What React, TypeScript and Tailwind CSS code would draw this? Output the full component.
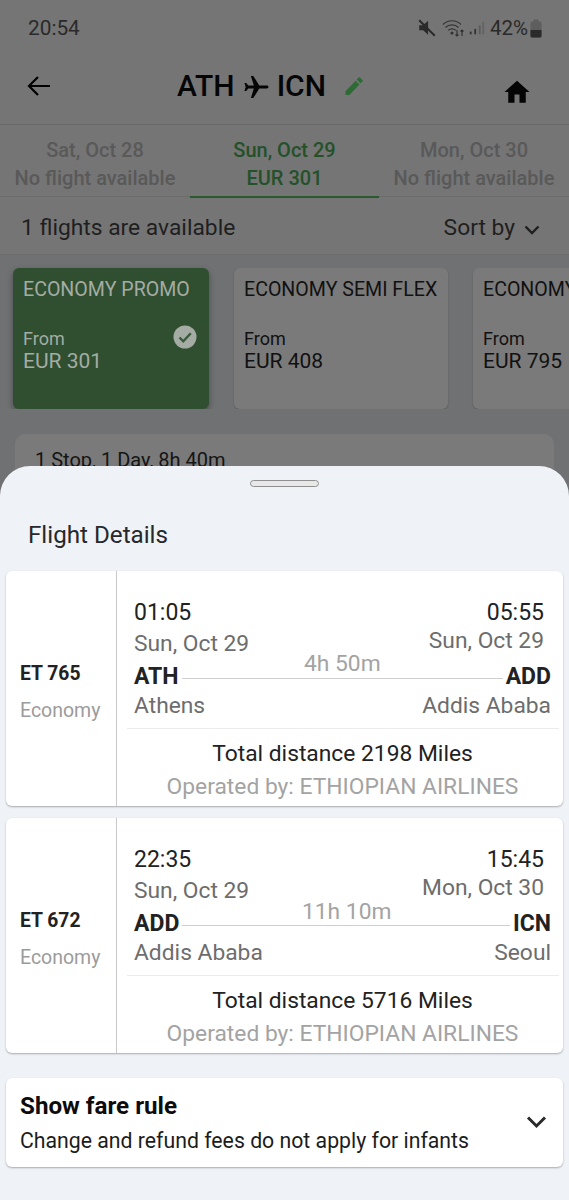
import React from "react";

function Leg(p: {
  no: string; dep: string; arr: string; depDate: string; arrDate: string; dur: string;
  from: string; to: string; fromCity: string; toCity: string; miles: string; durClass: string;
}) {
  return (
    <div className="flex h-[235px] mx-[6px] bg-white rounded-[6px] shadow-[0_1px_2px_rgba(0,0,0,0.3)]">
      <div className="w-[111px] shrink-0 border-r border-[#c9c9c9] pl-[14px] pt-[91px]">
        <div className="text-[19.300px] leading-[24px] font-bold text-[#222]">{p.no}</div>
        <div className="text-[19.500px] leading-[24px] text-[#9b9b9b] mt-[13px]">Economy</div>
      </div>
      <div className="flex-1 min-w-0 pt-[28px]">
        <div className="pr-[12px] pl-[17px]">
          <div className="flex justify-between text-[23px] leading-[27px] text-[#222] pr-[7px]">
            <span>{p.dep}</span><span>{p.arr}</span>
          </div>
          <div className="flex justify-between text-[22.800px] leading-[27px] text-[#6d6d6d] pr-[7px] mt-[1px]">
            <span className="mt-[3px]">{p.depDate}</span>
            <span>{p.arrDate}</span>
          </div>
          <div className="relative flex items-center mt-[5px] h-[30px]">
            <span className="text-[23px] leading-[30px] font-bold text-[#222]">{p.from}</span>
            <div className="flex-1 h-px bg-[#cfcfcf] mx-[3px] mt-[2px]" />
            <span className="text-[23px] leading-[30px] font-bold text-[#222]">{p.to}</span>
            <span className={"absolute text-[22.800px] leading-[27px] text-[#a3a3a3] " + p.durClass}>{p.dur}</span>
          </div>
          <div className="flex justify-between text-[22.800px] leading-[27px] text-[#6d6d6d]">
            <span>{p.fromCity}</span><span>{p.toCity}</span>
          </div>
        </div>
        <div className="h-px bg-[#ececec] ml-[10px] mr-[4px] mt-[9px]" />
        <div className="text-center text-[22.800px] leading-[27px] text-[#222] mt-[11px] pl-[5px]">Total distance {p.miles} Miles</div>
        <div className="text-center text-[22.800px] leading-[27px] text-[#a3a3a3] mt-[6px] pl-[5px]">Operated by: ETHIOPIAN AIRLINES</div>
      </div>
    </div>
  );
}

function Fare(p: { name: string; price: string; selected?: boolean; cls: string }) {
  return (
    <div className={"relative shrink-0 h-[141px] rounded-[6px] pt-[8px] " + p.cls}>
      <div className="text-[19.600px] leading-[28px] whitespace-nowrap">{p.name}</div>
      <div className="text-[18px] leading-[24px] mt-[23px]">From</div>
      <div className="text-[21px] leading-[26px] mt-[-3px]">{p.price}</div>
      {p.selected && (
        <svg className="absolute right-[12px] top-[57px]" width="24" height="24" viewBox="0 0 24 24">
          <circle cx="12" cy="12" r="11.5" fill="#a4aca4" />
          <path d="M6.5 12.5l3.8 3.8 7.5-8" fill="none" stroke="#3a5a3c" strokeWidth="2.4" />
        </svg>
      )}
    </div>
  );
}

export default function App() {
  return (
    <div className="relative w-[569px] h-[1200px] overflow-hidden bg-[#6f7173] font-['Roboto',sans-serif]">
      <div className="bg-[#757575]">
        <div className="flex items-center justify-between h-[56px] pl-[28px] pr-[27px] text-[#2a2a2a]">
          <span className="text-[20.800px] leading-[24px]">20:54</span>
          <div className="flex items-center">
            <svg width="20" height="20" viewBox="0 0 18 18" className="mr-[5px]">
              <path d="M2 6.5h3.5L10 2.5v12.5l-4.5-4H2z" fill="#2a2a2a" />
              <path d="M2 2l14 14" stroke="#2a2a2a" strokeWidth="1.8" />
            </svg>
            <svg width="24" height="20" viewBox="0 0 24 20" fill="none" stroke="#333" strokeWidth="1.2">
              <path d="M1 6.5c5-5 13-5 18 0M3.5 9.5c3.5-3.5 9.5-3.5 13 0M6.2 12.3c2-2 5.600-2 7.600 0" />
              <circle cx="10" cy="15" r="1" fill="#333" />
              <path d="M15 12v6M13.500 16.500l1.500 1.500 1.500-1.500M20 18v-6M18.500 13.500l1.500-1.500 1.500 1.500" />
            </svg>
            <svg width="18" height="18" viewBox="0 0 20 18" className="ml-[2px]">
              <rect x="2" y="13" width="2" height="3" fill="#333" />
              <rect x="7" y="10" width="2" height="6" fill="#333" />
              <rect x="12" y="6" width="2" height="10" fill="#5c5c5c" />
              <rect x="16" y="2" width="2" height="14" fill="#636363" />
            </svg>
            <span className="text-[20.500px] leading-[24px] ml-[4px]">42%</span>
            <svg width="12" height="19" viewBox="0 0 12 19" className="ml-[2px]">
              <rect x="3.500" y="0.500" width="5" height="2.500" fill="#5e5e5e" />
              <rect x="0.500" y="2.500" width="11" height="16" rx="1.500" fill="#5e5e5e" />
              <path d="M0.500 11h11v6a1.500 1.500 0 0 1-1.500 1.500h-8a1.500 1.500 0 0 1-1.500-1.500z" fill="#2a2a2a" />
            </svg>
          </div>
        </div>

        <div className="relative flex items-center justify-center h-[69px] border-b border-[#686868]">
          <svg className="absolute left-[27px] top-[18px]" width="24" height="24" viewBox="0 0 24 24" fill="none" stroke="#000" strokeWidth="2.2">
            <path d="M23 12H2M11 3l-9 9 9 9" />
          </svg>
          <div className="flex items-center text-[#050505] text-[30px] leading-[34px] font-medium mb-[9px] mr-[66px]">
            <span>ATH</span>
            <svg className="mx-[8px] mt-[2px]" width="26" height="26" viewBox="0 0 24 24" fill="#050505">
              <path d="M23.500 12c0-.8-.7-1.300-1.500-1.300h-7L9.500 1.800H7.300l2.700 8.900H4.800L3 8.300H1.300l1.200 3.700-1.200 3.700H3l1.800-2.400H10l-2.700 8.900h2.200l5.500-8.900h7c.8 0 1.500-.5 1.500-1.300z" />
            </svg>
            <span>ICN</span>
          </div>
          <svg className="absolute left-[342px] top-[18px]" width="24" height="24" viewBox="0 0 24 24" fill="#2d6a35">
            <path d="M3.500 17.200V21h3.800L17.500 10.500l-3.800-3.800zM20.500 7.500a1 1 0 0 0 0-1.400l-2.600-2.600a1 1 0 0 0-1.400 0l-1.900 1.900 3.900 3.900z" />
          </svg>
          <svg className="absolute left-[502px] top-[21px]" width="30" height="30" viewBox="0 0 24 24" fill="#050505">
            <path d="M10 20.500v-6.500h4v6.500h5v-8.500h3L12 3 2 12h3v8.500z" />
          </svg>
        </div>

        <div className="flex h-[72px] border-b border-[#6c6c6c]">
          <div className="w-[190px] text-center font-medium text-[#595959] text-[20px] leading-[28px] pt-[11px]">
            <div>Sat, Oct 28</div><div>No flight available</div>
          </div>
          <div className="w-[189px] text-center font-medium text-[#24512a] text-[20px] leading-[28px] pt-[11px] border-b-2 border-[#2c5a30] h-[73px]">
            <div>Sun, Oct 29</div><div>EUR 301</div>
          </div>
          <div className="w-[190px] text-center font-medium text-[#595959] text-[20px] leading-[28px] pt-[11px]">
            <div>Mon, Oct 30</div><div>No flight available</div>
          </div>
        </div>

        <div className="flex items-center justify-between h-[58px] pl-[21px] pr-[29px] text-[#1f1f1f] border-b border-[#6c6c6c]">
          <span className="text-[22.800px] leading-[28px] mt-[4px]">1 flights are available</span>
          <div className="flex items-center">
            <span className="text-[22.800px] leading-[28px] mt-[4px]">Sort by</span>
            <svg className="ml-[9px] mt-[8px]" width="16" height="10" viewBox="0 0 16 10" fill="none" stroke="#1f1f1f" strokeWidth="2.400">
              <path d="M1.500 1.500L8 8l6.500-6.500" />
            </svg>
          </div>
        </div>
      </div>

      <div className="flex items-start gap-[25px] pl-[13px] pt-[13px] overflow-hidden">
        <Fare name="ECONOMY PROMO" price="EUR 301" selected cls="w-[196px] pl-[10px] bg-[#2f4f30] text-[#a4aca4] shadow-[0_3px_6px_rgba(0,0,0,0.35)]" />
        <Fare name="ECONOMY SEMI FLEX" price="EUR 408" cls="w-[214px] pl-[10px] bg-[#7a7a7a] text-[#111] shadow-[0_1px_2px_rgba(0,0,0,0.2)]" />
        <Fare name="ECONOMY" price="EUR 795" cls="w-[214px] pl-[10px] bg-[#7a7a7a] text-[#111] shadow-[0_1px_2px_rgba(0,0,0,0.2)]" />
      </div>

      <div className="mx-[15px] mt-[25px] h-[100px] rounded-[10px] bg-[#7a7a7a] pl-[20px] pt-[12px] text-[20px] leading-[28px] text-[#151515]">
        1 Stop, 1 Day, 8h 40m
      </div>

      <div className="absolute left-0 right-0 top-[466px] bottom-0 bg-[#eff2f7] rounded-t-[30px]">
        <div className="w-[69px] h-[7px] mx-auto mt-[14px] rounded-full bg-[#e8e8e8] border border-[#8f8f8f]" />
        <div className="text-[24.200px] leading-[30px] text-[#26282b] pl-[28px] mt-[33px]">Flight Details</div>
        <div className="flex flex-col gap-[12px] mt-[21px]">
          <Leg no="ET 765" dep="01:05" arr="05:55" depDate="Sun, Oct 29" arrDate="Sun, Oct 29" dur="4h 50m" durClass="left-[170px] top-[-12px]" from="ATH" to="ADD" fromCity="Athens" toCity="Addis Ababa" miles="2198" />
          <Leg no="ET 672" dep="22:35" arr="15:45" depDate="Sun, Oct 29" arrDate="Mon, Oct 30" dur="11h 10m" durClass="left-[168px] top-[-11px]" from="ADD" to="ICN" fromCity="Addis Ababa" toCity="Seoul" miles="5716" />
        </div>
        <div className="flex items-center justify-between mx-[6px] mt-[25px] h-[89px] bg-white rounded-[6px] shadow-[0_1px_2px_rgba(0,0,0,0.3)] pl-[14px] pr-[16px]">
          <div>
            <div className="text-[24.200px] leading-[30px] font-bold text-[#0c0c0c] mt-[-1px]">Show fare rule</div>
            <div className="text-[21.250px] leading-[26px] text-[#1c1c1c] mt-[7px]">Change and refund fees do not apply for infants</div>
          </div>
          <svg className="mb-[1px]" width="21" height="14" viewBox="0 0 21 14" fill="none" stroke="#2a2a2a" strokeWidth="3">
            <path d="M2 2.500l8.500 8.500L19 2.500" />
          </svg>
        </div>
      </div>
    </div>
  );
}
